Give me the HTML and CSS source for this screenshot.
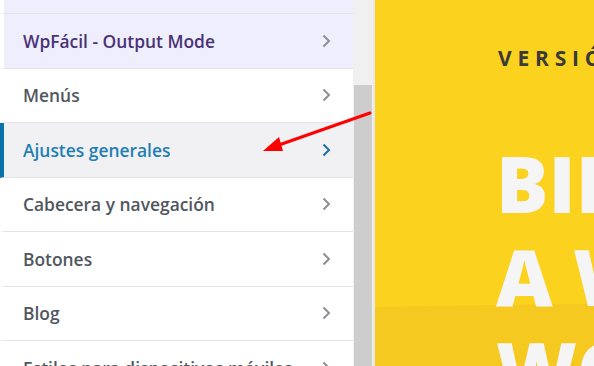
FILE: index.html
```html
<!DOCTYPE html>
<html lang="es">
<head>
<meta charset="utf-8">
<link rel="stylesheet" href="styles.css">
</head>
<body>
<div class="app">
  <aside class="panel">
    <ul class="list">
      <li class="row row-top"></li>
      <li class="row row-plugin"><span>WpFácil - Output Mode</span><svg class="chev" viewBox="0 0 9 14"><path d="M1.5 1.5 L7 7 L1.5 12.5"/></svg></li>
      <li class="row"><span>Menús</span><svg class="chev" viewBox="0 0 9 14"><path d="M1.5 1.5 L7 7 L1.5 12.5"/></svg></li>
      <li class="row row-active"><span>Ajustes generales</span><svg class="chev" viewBox="0 0 9 14"><path d="M1.5 1.5 L7 7 L1.5 12.5"/></svg></li>
      <li class="row"><span>Cabecera y navegación</span><svg class="chev" viewBox="0 0 9 14"><path d="M1.5 1.5 L7 7 L1.5 12.5"/></svg></li>
      <li class="row"><span>Botones</span><svg class="chev" viewBox="0 0 9 14"><path d="M1.5 1.5 L7 7 L1.5 12.5"/></svg></li>
      <li class="row"><span>Blog</span><svg class="chev" viewBox="0 0 9 14"><path d="M1.5 1.5 L7 7 L1.5 12.5"/></svg></li>
      <li class="row"><span>Estilos para dispositivos móviles</span><svg class="chev" viewBox="0 0 9 14"><path d="M1.5 1.5 L7 7 L1.5 12.5"/></svg></li>
    </ul>
    <div class="scrollbar"><div class="thumb"></div></div>
  </aside>
  <main class="preview">
    <div class="hero">
      <p class="kicker">VERSIÓN DEMO</p>
      <h1 class="title">BIENVENIDO<br>A WPFÁCIL<br>WORDPRESS</h1>
    </div>
  </main>
  <svg class="pointer" width="594" height="366" viewBox="0 0 594 366">
    <line x1="370" y1="113" x2="276" y2="146" stroke="#ff0000" stroke-width="3" stroke-linecap="round"/>
    <polygon points="263,151 279,137 283,151" fill="#ff0000"/>
  </svg>
</div>
</body>
</html>
```
FILE: styles.css
```css
html, body {
  margin: 0;
  padding: 0;
  width: 594px;
  height: 366px;
  overflow: hidden;
  background: #ffffff;
}
.app {
  position: relative;
  display: flex;
  width: 594px;
  height: 366px;
  overflow: hidden;
}
.panel {
  display: flex;
  width: 375px;
  flex: none;
  height: 366px;
  background: #ffffff;
}
.list {
  list-style: none;
  margin: 0;
  padding: 0;
  width: 353px;
  flex: none;
  overflow: hidden;
}
.row {
  display: flex;
  align-items: center;
  justify-content: space-between;
  box-sizing: border-box;
  height: 54.5px;
  padding: 0 22px 0 19px;
  border-left: 4px solid #ffffff;
  border-bottom: 1px solid #e4e4e8;
  background: #ffffff;
  font-family: "Open Sans", "Noto Sans", sans-serif;
  font-weight: 600;
  font-size: 17.4px;
  color: #50575e;
  white-space: nowrap;
}
.row span {
  overflow: hidden;
}
.row-top {
  height: 14px;
  background: #efeefc;
}
.row-plugin {
  background: #efeefc;
  color: #4a3277;
}
.row-active {
  background: #f1f1f3;
  border-left-color: #0a73aa;
  color: #1f7eb4;
}
.chev {
  width: 9px;
  height: 14px;
  flex: none;
}
.chev path {
  fill: none;
  stroke: #8c8f94;
  stroke-width: 2;
}
.row-active .chev path {
  stroke: #1f6fa0;
}
.scrollbar {
  width: 19px;
  flex: none;
  background: #f0f0f0;
  border-right: 3px solid #e8e8e8;
  padding: 85px 0 0 1px;
  box-sizing: content-box;
}
.thumb {
  width: 18px;
  height: 300px;
  background: #cdcdcd;
}
.preview {
  position: relative;
  flex: 1;
  height: 366px;
  background: #fbd21d;
  overflow: hidden;
}
.preview::before {
  content: "";
  position: absolute;
  left: -1600px;
  top: 303px;
  width: 4000px;
  height: 400px;
  border-radius: 50%;
  background: #f5c920;
}
.hero {
  position: relative;
  padding: 44px 0 0 123px;
  white-space: nowrap;
}
.kicker {
  margin: 0;
  font-family: "Open Sans", "Noto Sans", sans-serif;
  font-weight: 700;
  font-size: 21px;
  letter-spacing: 5.8px;
  color: #3a3a3a;
  line-height: 28px;
}
.title {
  margin: 65px 0 0 -2px;
  font-family: "Open Sans", "Noto Sans", sans-serif;
  font-weight: 800;
  font-size: 78px;
  line-height: 93px;
  color: #f5f5f5;
}
.pointer {
  position: absolute;
  left: 0;
  top: 0;
  pointer-events: none;
}
```
